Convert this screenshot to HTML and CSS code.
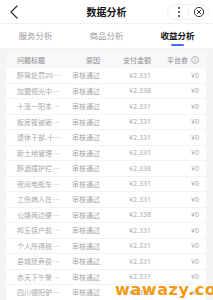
FILE: index.html
```html
<!DOCTYPE html>
<html lang="zh-CN">
<head>
<meta charset="utf-8">
<link rel="stylesheet" href="styles.css">
</head>
<body>
<div class="page">
  <header class="nav">
    <div class="nav-left">
      <svg class="back" width="10" height="14" viewBox="0 0 10 14"><path d="M8 1 L2 7 L8 13" fill="none" stroke="#333" stroke-width="1.2" stroke-linecap="round" stroke-linejoin="round"/></svg>
    </div>
    <div class="title">数据分析</div>
    <div class="nav-right">
      <div class="capsule">
        <svg width="10" height="14" viewBox="0 0 10 14"><circle cx="5" cy="3" r="1" fill="#333"/><circle cx="5" cy="7" r="1" fill="#333"/><circle cx="5" cy="11" r="1" fill="#333"/></svg>
        <span class="cap-div"></span>
        <svg width="12" height="12" viewBox="0 0 12 12"><circle cx="6" cy="6" r="4.6" fill="none" stroke="#333" stroke-width="1"/><path d="M4.3 4.3 L7.7 7.7 M7.7 4.3 L4.3 7.7" stroke="#333" stroke-width="1" stroke-linecap="round"/></svg>
      </div>
    </div>
  </header>
  <nav class="tabs">
    <div class="tab">服务分析</div>
    <div class="tab">商品分析</div>
    <div class="tab active">收益分析<span class="bar"></span></div>
  </nav>
  <section class="card">
    <div class="row head">
      <span class="c1">问题标题</span>
      <span class="c2">原因</span>
      <span class="c3">支付金额</span>
      <span class="c4">平台券<svg class="info" width="8" height="8" viewBox="0 0 8 8"><circle cx="4" cy="4" r="3.4" fill="none" stroke="#999" stroke-width="0.7"/><path d="M4 3.4 V6" stroke="#999" stroke-width="0.8"/><circle cx="4" cy="2.2" r="0.45" fill="#999"/></svg></span>
    </div>
    <div class="row"><span class="c1">醉驾处罚20<i class="dots">⋯</i></span><span class="c2">审核通过</span><span class="c3">¥2.331</span><span class="c4">¥0</span></div>
    <div class="row"><span class="c1">加盟视光中<i class="dots">⋯</i></span><span class="c2">审核通过</span><span class="c3">¥2.338</span><span class="c4">¥0</span></div>
    <div class="row"><span class="c1">十涨一阳本<i class="dots">⋯</i></span><span class="c2">审核通过</span><span class="c3">¥2.331</span><span class="c4">¥0</span></div>
    <div class="row"><span class="c1">板房筱被砸<i class="dots">⋯</i></span><span class="c2">审核通过</span><span class="c3">¥2.331</span><span class="c4">¥0</span></div>
    <div class="row"><span class="c1">退休干部.十<i class="dots">⋯</i></span><span class="c2">审核通过</span><span class="c3">¥2.331</span><span class="c4">¥0</span></div>
    <div class="row"><span class="c1">新土地管理<i class="dots">⋯</i></span><span class="c2">审核通过</span><span class="c3">¥2.331</span><span class="c4">¥0</span></div>
    <div class="row"><span class="c1">醉酒撞护栏<i class="dots">⋯</i></span><span class="c2">审核通过</span><span class="c3">¥2.338</span><span class="c4">¥0</span></div>
    <div class="row"><span class="c1">夜间电瓶车<i class="dots">⋯</i></span><span class="c2">审核通过</span><span class="c3">¥2.331</span><span class="c4">¥0</span></div>
    <div class="row"><span class="c1">工伤病人在<i class="dots">⋯</i></span><span class="c2">审核通过</span><span class="c3">¥2.331</span><span class="c4">¥0</span></div>
    <div class="row"><span class="c1">公路两边便<i class="dots">⋯</i></span><span class="c2">审核通过</span><span class="c3">¥2.338</span><span class="c4">¥0</span></div>
    <div class="row"><span class="c1">邦五保户前<i class="dots">⋯</i></span><span class="c2">审核通过</span><span class="c3">¥2.331</span><span class="c4">¥0</span></div>
    <div class="row"><span class="c1">个人所得税<i class="dots">⋯</i></span><span class="c2">审核通过</span><span class="c3">¥2.331</span><span class="c4">¥0</span></div>
    <div class="row"><span class="c1">县城抚养费<i class="dots">⋯</i></span><span class="c2">审核通过</span><span class="c3">¥2.331</span><span class="c4">¥0</span></div>
    <div class="row"><span class="c1">赤天下午警<i class="dots">⋯</i></span><span class="c2">审核通过</span><span class="c3">¥2.331</span><span class="c4">¥0</span></div>
    <div class="row"><span class="c1">四川德阳驴<i class="dots">⋯</i></span><span class="c2">审核通过</span><span class="c3">¥2.331</span><span class="c4">¥0</span></div>
  </section>
  <div class="watermark">wawazy.com</div>
</div>
</body>
</html>
```

FILE: styles.css
```css
* { box-sizing: border-box; }
html, body {
  margin: 0;
  padding: 0;
  background: #f4f4f4;
  font-family: "Noto Sans", "Noto Sans CJK SC", sans-serif;
}
.page {
  position: relative;
  width: 213px;
  height: 300px;
  overflow: hidden;
}
.nav {
  height: 24px;
  background: #fff;
  display: grid;
  grid-template-columns: 1fr auto 1fr;
  align-items: center;
  border-bottom: 1px solid #f1f1f1;
}
.nav-left {
  display: flex;
  align-items: center;
  padding-left: 9px;
}
.title {
  font-family: "Noto Sans CJK SC", sans-serif;
  font-size: 10px;
  font-weight: 700;
  color: #111;
  line-height: 24px;
}
.nav-right {
  display: flex;
  justify-content: flex-end;
  padding-right: 4px;
}
.capsule {
  display: flex;
  align-items: center;
  gap: 4px;
  height: 16px;
  padding: 0 3px 0 6px;
  border: 1px solid #f0f0f0;
  border-radius: 8px;
}
.cap-div {
  width: 1px;
  height: 9px;
  background: #ececec;
}
.tabs {
  height: 24px;
  background: #fff;
  display: grid;
  grid-template-columns: repeat(3, 1fr);
}
.tab {
  display: flex;
  flex-direction: column;
  align-items: center;
  padding-top: 6px;
  font-family: "Noto Sans CJK SC", sans-serif;
  font-size: 8.5px;
  line-height: 10px;
  color: #9a9a9a;
}
.tab.active {
  color: #111;
  font-weight: 700;
}
.bar {
  display: block;
  width: 13px;
  height: 2px;
  border-radius: 1px;
  background: #3f6ef2;
  margin-top: 4px;
}
.card {
  margin: 4px 7px 0 6px;
  background: #fff;
  border-radius: 3px;
  overflow: hidden;
}
.row {
  display: grid;
  grid-template-columns: 51px 32px 51px 1fr;
  align-items: center;
  height: 15.5px;
  padding: 0 7px 0 11px;
  border-bottom: 1px solid #f3f3f3;
  font-family: "Noto Sans", "Noto Sans CJK SC", sans-serif;
  font-size: 7px;
  color: #a9a9a9;
  white-space: nowrap;
}
.row.head {
  height: 16px;
  background: #f8f8f8;
  color: #8a8a8a;
  border-bottom: none;
}
.c1 { text-align: left; overflow: hidden; }
.dots {
  font-style: normal;
  font-family: "Noto Sans CJK SC", sans-serif;
  color: #b5b5b5;
  margin-left: 1px;
}
.c2, .c3, .c4 { text-align: right; }
.c4 {
  display: flex;
  justify-content: flex-end;
  align-items: center;
  gap: 3px;
}
.watermark {
  position: absolute;
  left: 115px;
  top: 282px;
  font-family: "DejaVu Sans", sans-serif;
  font-weight: 700;
  font-size: 16px;
  line-height: 16px;
  letter-spacing: 0.6px;
  color: #f29a12;
}
```
